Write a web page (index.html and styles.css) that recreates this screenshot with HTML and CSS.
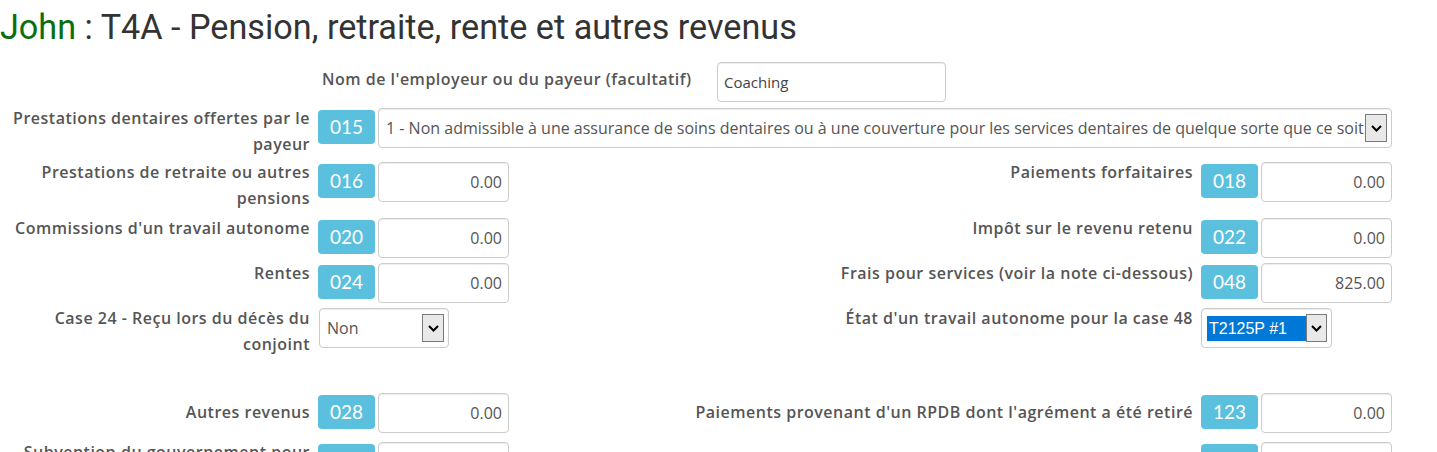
FILE: index.html
```html
<!DOCTYPE html>
<html lang="fr">
<head>
  <meta charset="UTF-8" />
  <title>T4A - Pension, retraite, rente et autres revenus</title>
  <link rel="stylesheet" href="styles.css">
</head>
<body>

<h1 class="page-title"><span class="who">John</span> : T4A - Pension, retraite, rente et autres revenus</h1>

<div class="form">

  <div class="name-row">
    <label class="name-label">Nom de l'employeur ou du payeur (facultatif)</label>
    <input class="field text-field" type="text" value="Coaching">
  </div>

  <div class="row tight">
    <label class="lbl">Prestations dentaires offertes par le payeur</label>
    <span class="box">015</span>
    <div class="select wide">
      <span class="val">1 - Non admissible à une assurance de soins dentaires ou à une couverture pour les services dentaires de quelque sorte que ce soit</span>
      <span class="arrow"><svg width="11" height="7" viewBox="0 0 11 7"><path d="M1 1 L5.5 5.5 L10 1" fill="none" stroke="#000" stroke-width="2"/></svg></span>
    </div>
  </div>

  <div class="row">
    <label class="lbl">Prestations de retraite ou autres pensions</label>
    <span class="box">016</span>
    <input class="field num" type="text" value="0.00">
    <label class="lbl right">Paiements forfaitaires</label>
    <span class="box">018</span>
    <input class="field num" type="text" value="0.00">
  </div>

  <div class="row">
    <label class="lbl">Commissions d'un travail autonome</label>
    <span class="box">020</span>
    <input class="field num" type="text" value="0.00">
    <label class="lbl right">Impôt sur le revenu retenu</label>
    <span class="box">022</span>
    <input class="field num" type="text" value="0.00">
  </div>

  <div class="row">
    <label class="lbl">Rentes</label>
    <span class="box">024</span>
    <input class="field num" type="text" value="0.00">
    <label class="lbl right">Frais pour services (voir la note ci-dessous)</label>
    <span class="box">048</span>
    <input class="field num" type="text" value="825.00">
  </div>

  <div class="row">
    <label class="lbl">Case 24 - Reçu lors du décès du conjoint</label>
    <div class="select small">
      <span class="val">Non</span>
      <span class="arrow"><svg width="11" height="7" viewBox="0 0 11 7"><path d="M1 1 L5.5 5.5 L10 1" fill="none" stroke="#000" stroke-width="2"/></svg></span>
    </div>
    <label class="lbl right">État d'un travail autonome pour la case 48</label>
    <div class="select small pick">
      <span class="val chosen">T2125P #1</span>
      <span class="arrow"><svg width="11" height="7" viewBox="0 0 11 7"><path d="M1 1 L5.5 5.5 L10 1" fill="none" stroke="#000" stroke-width="2"/></svg></span>
    </div>
  </div>

  <div class="spacer"></div>

  <div class="row low">
    <label class="lbl">Autres revenus</label>
    <span class="box">028</span>
    <input class="field num" type="text" value="0.00">
    <label class="lbl right">Paiements provenant d'un RPDB dont l'agrément a été retiré</label>
    <span class="box">123</span>
    <input class="field num" type="text" value="0.00">
  </div>

  <div class="row">
    <label class="lbl">Subvention du gouvernement pour les frais de garde</label>
    <span class="box">030</span>
    <input class="field num" type="text" value="0.00">
    <label class="lbl right">&nbsp;</label>
    <span class="box">130</span>
    <input class="field num" type="text" value="0.00">
  </div>

</div>

</body>
</html>
```

FILE: styles.css
```css
* {
  box-sizing: border-box;
}

body {
  margin: 0;
  overflow: hidden;
  background: #fff;
  font-family: "Open Sans", Lato, sans-serif;
  color: #555;
}

.page-title {
  margin: 0;
  padding: 7px 0 0 0;
  height: 62px;
  font-family: Roboto, sans-serif;
  font-weight: normal;
  font-size: 34.2px;
  line-height: 40px;
  color: #333;
  white-space: nowrap;
}

.page-title .who {
  color: #0b6e0b;
}

.name-row {
  display: flex;
  align-items: flex-start;
  margin-left: 322px;
  margin-bottom: 6px;
}

.name-label {
  font-weight: 600;
  font-size: 16px;
  letter-spacing: 0.5px;
  line-height: 26px;
  width: 395px;
  padding-top: 4px;
}

.row {
  display: grid;
  grid-template-columns: 318px 57px 134px 1fr 57px 134px;
  align-items: start;
  margin-right: 45px;
  margin-bottom: 5px;
}

.row.tight {
  margin-bottom: 3px;
}

.lbl {
  font-weight: 600;
  font-size: 16px;
  letter-spacing: 0.5px;
  line-height: 26px;
  text-align: right;
  padding-right: 8px;
  margin-top: -3px;
  margin-bottom: 2px;
}

.row.low {
  margin-bottom: 9px;
}

.row.low .lbl {
  margin-top: 6px;
}

.box {
  display: block;
  height: 34px;
  margin-top: 2px;
  background: #5bc0de;
  color: #fff;
  border-radius: 4px;
  font-family: Lato, sans-serif;
  font-size: 19px;
  line-height: 34px;
  text-align: center;
}

.field {
  display: block;
  height: 40px;
  border: 1px solid #ccc;
  border-radius: 4px;
  box-shadow: inset 0 1px 1px rgba(0, 0, 0, 0.075);
  font-family: "Open Sans", Lato, sans-serif;
  font-size: 16px;
  color: #555;
  outline: none;
}

.num {
  width: 131px;
  margin-left: 3px;
  text-align: right;
  padding: 0 6px 0 6px;
}

.text-field {
  width: 229px;
  padding: 0 6px;
  font-size: 15px;
  color: #444;
}

.select {
  display: flex;
  align-items: center;
  height: 40px;
  border: 1px solid #ccc;
  border-radius: 4px;
  box-shadow: inset 0 1px 1px rgba(0, 0, 0, 0.075);
  padding: 0 4px 0 7px;
  font-size: 16px;
  color: #555;
}

.select .val {
  flex: 1;
  white-space: nowrap;
  overflow: hidden;
}

.select .arrow {
  display: flex;
  align-items: center;
  justify-content: center;
  width: 22px;
  height: 28px;
  border: 1px solid #7a7a7a;
  background: #e9e9e9;
}

.select.wide {
  grid-column: 3 / 7;
  margin-left: 3px;
}

.select.small {
  grid-column: 2 / 4;
  width: 130px;
  margin-left: 1px;
}

.row .select.pick {
  grid-column: 5 / 7;
  width: 131px;
  margin-left: 0;
  padding-left: 5px;
}

.select .chosen {
  flex: none;
  width: 99px;
  height: 25px;
  line-height: 25px;
  background: #0078d7;
  color: #fff;
  font-family: "Liberation Sans", Arial, sans-serif;
  font-size: 16px;
  padding-left: 2px;
}

.spacer {
  height: 29px;
}
```
